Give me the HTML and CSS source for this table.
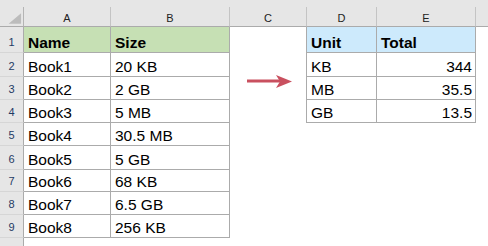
FILE: index.html
```html
<!DOCTYPE html>
<html>
<head>
<meta charset="utf-8">
<link rel="stylesheet" href="styles.css">
</head>
<body>
<div class="sheet">
  <div class="topstrip"></div>
  <div class="grid">
    <div class="corner"><svg width="24" height="20" viewBox="0 0 24 20"><polygon points="22,6 22,17 9,17" fill="#bcbcbc"/></svg></div>
    <div class="ch">A</div><div class="ch">B</div><div class="ch">C</div><div class="ch">D</div><div class="ch">E</div><div class="ch last"></div>

    <div class="rh">1</div><div class="c t g b">Name</div><div class="c t g b">Size</div><div class="c tl"></div><div class="c t bl b">Unit</div><div class="c t bl b">Total</div><div class="c"></div>
    <div class="rh">2</div><div class="c t">Book1</div><div class="c t">20 KB</div><div class="c tl"></div><div class="c t">KB</div><div class="c t r">344</div><div class="c"></div>
    <div class="rh">3</div><div class="c t">Book2</div><div class="c t">2 GB</div><div class="c tl"></div><div class="c t">MB</div><div class="c t r">35.5</div><div class="c"></div>
    <div class="rh">4</div><div class="c t">Book3</div><div class="c t">5 MB</div><div class="c tl"></div><div class="c t">GB</div><div class="c t r">13.5</div><div class="c"></div>
    <div class="rh">5</div><div class="c t">Book4</div><div class="c t">30.5 MB</div><div class="c"></div><div class="c"></div><div class="c"></div><div class="c"></div>
    <div class="rh">6</div><div class="c t">Book5</div><div class="c t">5 GB</div><div class="c"></div><div class="c"></div><div class="c"></div><div class="c"></div>
    <div class="rh">7</div><div class="c t">Book6</div><div class="c t">68 KB</div><div class="c"></div><div class="c"></div><div class="c"></div><div class="c"></div>
    <div class="rh">8</div><div class="c t">Book7</div><div class="c t">6.5 GB</div><div class="c"></div><div class="c"></div><div class="c"></div><div class="c"></div>
    <div class="rh">9</div><div class="c t">Book8</div><div class="c t">256 KB</div><div class="c"></div><div class="c"></div><div class="c"></div><div class="c"></div>
    <div class="rh">10</div><div class="c"></div><div class="c"></div><div class="c"></div><div class="c"></div><div class="c"></div><div class="c"></div>
  </div>
  <svg class="arrow" width="48" height="16" viewBox="0 0 48 16">
    <path d="M1 7 H34" stroke="#c9505f" stroke-width="3" fill="none"/>
    <path d="M30 1 L46 7.5 L30 14 L34 7.5 Z" fill="#c9505f"/>
  </svg>
</div>
</body>
</html>
```

FILE: styles.css
```css
html, body {
  margin: 0;
  padding: 0;
  background: #fff;
  overflow: hidden;
}
.sheet {
  position: relative;
  width: 488px;
  height: 246px;
  overflow: hidden;
  font-family: "Liberation Sans", Arial, sans-serif;
}
.topstrip {
  height: 7px;
  background: #e6e6e6;
}
.grid {
  display: grid;
  grid-template-columns: 24px 87px 119px 77px 70px 99px 12px;
  grid-template-rows: 20px 26px 24px 23px 23px 23px 24px 22px 23px 23px 23px;
}
.grid > div {
  box-sizing: border-box;
}
.corner {
  background: #e6e6e6;
  border-right: 1px solid #b4b4b4;
  border-bottom: 1px solid #ababab;
  display: flex;
}
.ch {
  background: #e6e6e6;
  border-right: 1px solid #c4c4c4;
  border-bottom: 1px solid #ababab;
  font-size: 11px;
  color: #222;
  display: flex;
  align-items: center;
  justify-content: center;
  padding-top: 2px;
}
.ch.last {
  border-right: none;
}
.rh {
  background: #e6e6e6;
  border-right: 1px solid #ababab;
  border-bottom: 1px solid #d6d6d6;
  font-size: 11px;
  color: #1f3b64;
  display: flex;
  align-items: flex-end;
  justify-content: center;
  line-height: 14px;
  padding-bottom: 3px;
}
.c {
  font-size: 15.5px;
  line-height: 18px;
  color: #000;
  display: flex;
  align-items: flex-end;
  padding: 0 3px 0 4px;
  white-space: nowrap;
}
.t {
  border-right: 1px solid #ababab;
  border-bottom: 1px solid #ababab;
}
.tl {
  border-right: 1px solid #ababab;
}
.g {
  background: #c6e0b4;
}
.bl {
  background: #cdeafc;
}
.b {
  font-weight: bold;
}
.r {
  justify-content: flex-end;
}
.arrow {
  position: absolute;
  left: 246px;
  top: 74px;
}
```
